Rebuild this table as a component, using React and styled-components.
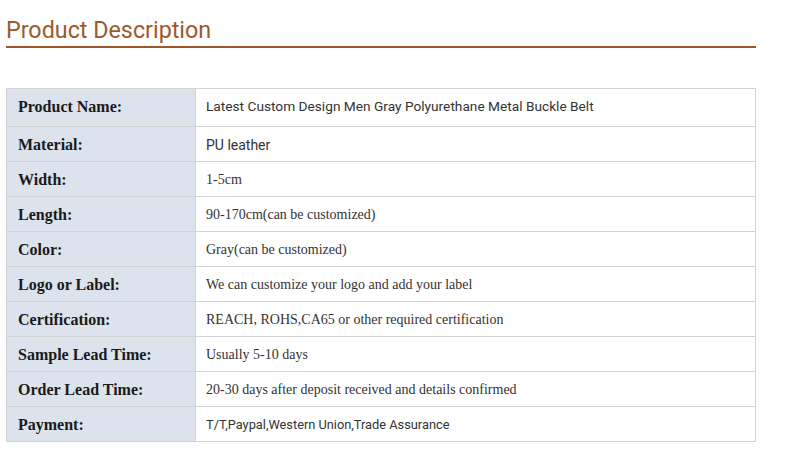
import React from "react"
import styled, { createGlobalStyle } from "styled-components"

const GlobalStyle = createGlobalStyle`
  body {
    margin: 0;
    background: #fff;
  }
`

const rows = [
  { label: "Product Name:", value: "Latest Custom Design Men Gray Polyurethane Metal Buckle Belt", sans: true, size: 13.7, tall: true },
  { label: "Material:", value: "PU leather", sans: true },
  { label: "Width:", value: "1-5cm" },
  { label: "Length:", value: "90-170cm(can be customized)" },
  { label: "Color:", value: "Gray(can be customized)" },
  { label: "Logo or Label:", value: "We can customize your logo and add your label" },
  { label: "Certification:", value: "REACH, ROHS,CA65 or other required certification" },
  { label: "Sample Lead Time:", value: "Usually 5-10 days" },
  { label: "Order Lead Time:", value: "20-30 days after deposit received and details confirmed" },
  { label: "Payment:", value: "T/T,Paypal,Western Union,Trade Assurance", sans: true, size: 12.8 },
]

const App = () => {
  return (
    <Page>
      <GlobalStyle />
      <Heading>Product Description</Heading>
      <SpecTable>
        <tbody>
          {rows.map((row) => (
            <Row key={row.label} $tall={row.tall}>
              <Label $tall={row.tall}>{row.label}</Label>
              <Value $tall={row.tall} $sans={row.sans} $size={row.size}>
                {row.value}
              </Value>
            </Row>
          ))}
        </tbody>
      </SpecTable>
    </Page>
  )
}

export default App

const Page = styled.div`
  padding: 16px 6px 0;
  width: 750px;
`

const Heading = styled.h2`
  margin: 0;
  font-family: Roboto, "Liberation Sans", sans-serif;
  font-weight: 400;
  font-size: 23.3px;
  line-height: 28px;
  color: #9b5a2e;
  padding-bottom: 2px;
  border-bottom: 2px solid #a0562a;
`

const SpecTable = styled.table`
  margin-top: 40px;
  width: 750px;
  border-collapse: collapse;
  border: 1px solid #d2d2d2;
`

const Row = styled.tr`
  height: ${(p) => (p.$tall ? "38px" : "35px")};
`

const Label = styled.td`
  width: 177px;
  padding: ${(p) => (p.$tall ? "0 0 2px 11px" : "2px 0 0 11px")};
  background: #dce3ed;
  border: 1px solid #d2d2d2;
  font-family: "Liberation Serif", serif;
  font-weight: bold;
  font-size: 16px;
  color: #1a1a1a;
  vertical-align: middle;
`

const Value = styled.td`
  padding: ${(p) => (p.$tall ? "0 0 4px 10px" : "1px 0 0 10px")};
  border: 1px solid #d2d2d2;
  font-family: ${(p) => (p.$sans ? 'Roboto, "Liberation Sans", sans-serif' : '"Liberation Serif", serif')};
  font-size: ${(p) => (p.$size ? `${p.$size}px` : "14px")};
  color: #333;
  vertical-align: middle;
`
